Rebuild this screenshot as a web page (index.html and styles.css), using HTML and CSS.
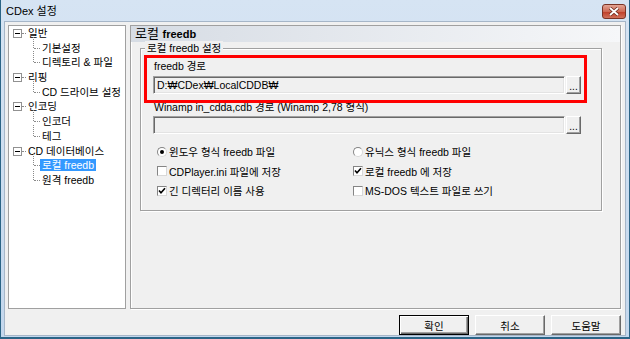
FILE: index.html
```html
<!DOCTYPE html>
<html lang="ko">
<head>
    <meta charset="UTF-8">
    <title>CDex 설정</title>
    <link rel="stylesheet" href="styles.css">
</head>
<body>
<div class="window">
    <div class="titlebar">
        <span class="title">CDex 설정</span>
        <span class="close">
            <svg width="12" height="9" viewBox="0 0 12 9">
                <path d="M2 1 L10 8 M10 1 L2 8" stroke="#6b2a1e" stroke-width="3.4" fill="none"/>
                <path d="M2 1 L10 8 M10 1 L2 8" stroke="#fff" stroke-width="1.8" fill="none"/>
            </svg>
        </span>
    </div>
    <div class="client">
        <div class="main">
            <ul class="tree">
                <li class="node"><span class="exp"></span>일반</li>
                <li class="leaf">기본설정</li>
                <li class="leaf">디렉토리 &amp; 파일</li>
                <li class="node"><span class="exp"></span>리핑</li>
                <li class="leaf">CD 드라이브 설정</li>
                <li class="node"><span class="exp"></span>인코딩</li>
                <li class="leaf">인코더</li>
                <li class="leaf">테그</li>
                <li class="node"><span class="exp"></span>CD 데이터베이스</li>
                <li class="leaf"><span class="sel">로컬 freedb</span></li>
                <li class="leaf">원격 freedb</li>
            </ul>
            <div class="page">
                <div class="page-head">로컬 <b>freedb</b></div>
                <div class="group">
                    <div class="group-title">로컬 freedb 설정</div>
                    <div class="label">freedb 경로</div>
                    <div class="path-row">
                        <div class="edit">D:₩CDex₩LocalCDDB₩</div>
                        <div class="browse">...</div>
                    </div>
                    <div class="label second">Winamp in_cdda,cdb 경로 (Winamp 2,78 형식)</div>
                    <div class="path-row second">
                        <div class="edit"></div>
                        <div class="browse">...</div>
                    </div>
                    <div class="options">
                        <div class="opt"><span class="radio on"></span>윈도우 형식 freedb 파일</div>
                        <div class="opt"><span class="radio"></span>유닉스 형식 freedb 파일</div>
                        <div class="opt"><span class="check"></span>CDPlayer.ini 파일에 저장</div>
                        <div class="opt"><span class="check"><svg width="8" height="8" viewBox="0 0 8 8"><path d="M1 3.5 L3 5.8 L7 1.2" stroke="#000" stroke-width="1.6" fill="none"/></svg></span>로컬 freedb 에 저장</div>
                        <div class="opt"><span class="check"><svg width="8" height="8" viewBox="0 0 8 8"><path d="M1 3.5 L3 5.8 L7 1.2" stroke="#000" stroke-width="1.6" fill="none"/></svg></span>긴 디렉터리 이름 사용</div>
                        <div class="opt"><span class="check"></span>MS-DOS 텍스트 파일로 쓰기</div>
                    </div>
                </div>
            </div>
        </div>
        <div class="buttons">
            <span class="btn default">확인</span>
            <span class="btn">취소</span>
            <span class="btn">도움말</span>
        </div>
    </div>
    <div class="callout"></div>
</div>
</body>
</html>
```

FILE: styles.css
```css
* {
    margin: 0;
    padding: 0;
    box-sizing: border-box;
    list-style: none;
}

body {
    font: 10.5px "Liberation Sans", "Noto Sans CJK KR", sans-serif;
    color: #000;
    background: #fff;
}

.window {
    position: relative;
    width: 630px;
    height: 339px;
    padding: 0 3px 1px;
    border: 1px solid #2b6486;
    border-top: 0;
    border-bottom-width: 2px;
    background: linear-gradient(#d6e4f3, #c3d7ed);
}

/* title bar */
.titlebar {
    height: 21px;
    display: flex;
    align-items: flex-start;
}

.title {
    padding: 5px 0 0 2px;
    font-size: 11px;
    line-height: 13px;
}

.close {
    width: 24px;
    height: 15px;
    margin: 4px 0 0 auto;
    display: flex;
    align-items: center;
    justify-content: center;
    border: 1px solid #7a3325;
    border-radius: 3px;
    background: linear-gradient(#e3a595, #cf6a55 50%, #c0402a 55%, #d0705a);
}

/* client area */
.client {
    height: 315px;
    padding: 3px 4px 0 3px;
    border: 1px solid #a6b6c8;
    background: #f0f0f0;
}

.main {
    display: flex;
    gap: 4px;
    height: 284px;
}

/* tree */
.tree {
    width: 118px;
    border: 1px solid #a0a0a0;
    background: #fff;
    line-height: 14.7px;
}

.tree li {
    position: relative;
    height: 14.7px;
    white-space: nowrap;
}

.tree .node {
    padding-left: 19px;
}

.tree .leaf {
    padding-left: 33px;
}

.exp {
    position: absolute;
    left: 4px;
    top: 3px;
    width: 9px;
    height: 9px;
    border: 1px solid #919191;
    background: #fff;
}

.exp::before {
    content: "";
    position: absolute;
    left: 1px;
    top: 3px;
    width: 5px;
    height: 1px;
    background: #000;
}

.tree .node::after {
    content: "";
    position: absolute;
    left: 13px;
    top: 7px;
    width: 4px;
    border-top: 1px dotted #8a8a8a;
}

.tree .leaf::before {
    content: "";
    position: absolute;
    left: 24px;
    top: -4px;
    height: 11px;
    border-left: 1px dotted #8a8a8a;
}

.tree .leaf::after {
    content: "";
    position: absolute;
    left: 25px;
    top: 7px;
    width: 6px;
    border-top: 1px dotted #8a8a8a;
}

.sel {
    margin-left: -2px;
    padding: 0 2px;
    background: #3399ff;
    color: #fff;
}

/* right page */
.page {
    width: 491px;
    border: 1px solid #a0a0a0;
    box-shadow: inset 1px 1px 0 #fff, 1px 1px 0 #fff;
}

.page-head {
    height: 16px;
    padding-left: 4px;
    font-size: 13px;
    line-height: 16px;
    background: linear-gradient(to right, #d6dce4, #f6f7f9);
}

.page-head b {
    font-size: 11px;
}

.group {
    height: 163px;
    margin: 6px 18px 0 9px;
    border: 1px solid #a0a0a0;
    box-shadow: inset 1px 1px 0 #fff, 1px 1px 0 #fff;
}

.group-title {
    display: table;
    margin: -8px 0 0 4px;
    padding: 0 2px;
    line-height: 14px;
    background: #f0f0f0;
}

.label {
    margin: 4px 0 0 13px;
    line-height: 14px;
}

.label.second {
    margin-top: 6px;
}

.path-row {
    display: flex;
    gap: 1px;
    height: 18px;
    margin: 3px 0 0 12px;
}

.path-row.second {
    margin-top: 2px;
}

.edit {
    width: 412px;
    padding-left: 3px;
    line-height: 16px;
    border: 1px solid;
    border-color: #a0a0a0 #fff #fff #a0a0a0;
    box-shadow: inset 1px 1px 0 #696969, inset -1px -1px 0 #e3e3e3;
}

.browse {
    width: 15px;
    display: flex;
    align-items: flex-end;
    justify-content: center;
    font-size: 10px;
    line-height: 12px;
    border: 1px solid;
    border-color: #fff #696969 #696969 #fff;
    box-shadow: inset -1px -1px 0 #a0a0a0;
}

.options {
    display: grid;
    grid-template-columns: 196px 1fr;
    grid-auto-rows: 19.5px;
    margin: 8px 0 0 16px;
}

.opt {
    display: flex;
    align-items: center;
    gap: 2px;
    white-space: nowrap;
}

.check,
.radio {
    flex: none;
    width: 10px;
    height: 10px;
    display: flex;
    align-items: center;
    justify-content: center;
    background: #fff;
    border: 1px solid;
    border-color: #858585 #d8d8d8 #d8d8d8 #858585;
}

.radio {
    border-radius: 50%;
}

.radio.on::after {
    content: "";
    width: 4px;
    height: 4px;
    border-radius: 50%;
    background: #000;
}

/* bottom buttons */
.buttons {
    display: flex;
    justify-content: flex-end;
    gap: 6px;
    margin-top: 6px;
}

.btn {
    width: 70px;
    height: 20px;
    display: flex;
    align-items: center;
    justify-content: center;
    border: 1px solid;
    border-color: #fff #696969 #696969 #fff;
    box-shadow: inset -1px -1px 0 #a0a0a0;
}

.btn.default {
    border-color: #000;
    box-shadow: inset 1px 1px 0 #fff, inset -1px -1px 0 #696969, inset -2px -2px 0 #a0a0a0;
}

/* annotation */
.callout {
    position: absolute;
    left: 143px;
    top: 55px;
    width: 443px;
    height: 48px;
    border: 3px solid #ff0000;
}
```
